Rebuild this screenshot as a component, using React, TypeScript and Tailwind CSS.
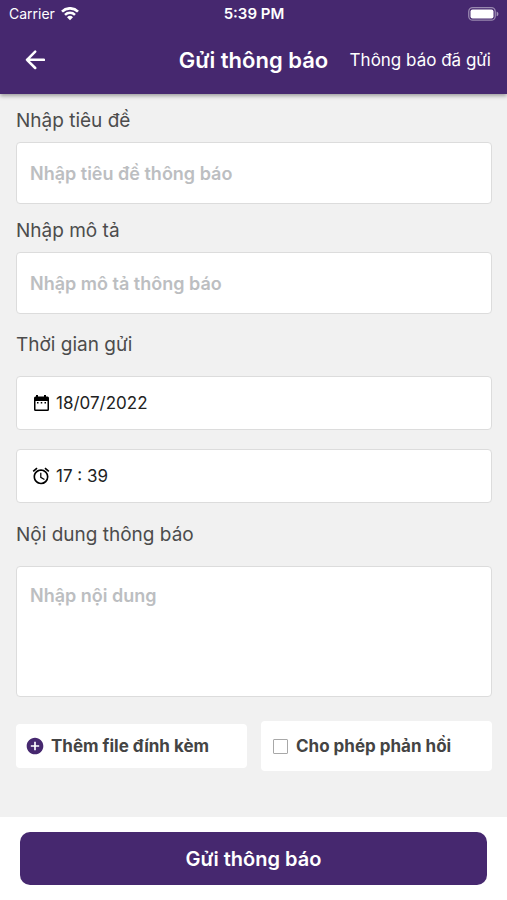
import { useState } from 'react';
import type { ReactNode } from 'react';
import { MdAddCircle, MdAlarm } from 'react-icons/md';

function WifiIcon() {
  return (
    <svg viewBox="0 0 18 14" className="w-[18px] h-[14px]" fill="none" stroke="currentColor" aria-hidden="true">
      <path d="M1 4.6a11.4 11.4 0 0 1 16 0" strokeWidth="2.7" />
      <path d="M4 7.8a7.1 7.1 0 0 1 10 0" strokeWidth="2.5" />
      <path d="M9 13.2 6 10.2a4.3 4.3 0 0 1 6 0Z" fill="currentColor" stroke="none" />
    </svg>
  );
}

function BatteryIcon() {
  return (
    <svg viewBox="0 0 31 14" className="w-[31px] h-[14px]" aria-hidden="true">
      <rect x="0.75" y="0.65" width="26.5" height="12.5" rx="4" fill="none" stroke="#fff" strokeOpacity="0.45" strokeWidth="1.3" />
      <rect x="2.5" y="2.4" width="23" height="9" rx="2" fill="#fff" />
      <path d="M28.6 4.5c1.2.5 1.8 1.3 1.8 2.4s-.6 1.900-1.800 2.400Z" fill="#fff" fillOpacity="0.5" />
    </svg>
  );
}

function BackIcon() {
  return (
    <svg
      viewBox="0 0 20 20"
      className="w-5 h-5"
      fill="none"
      stroke="currentColor"
      strokeWidth="2.5"
      strokeLinecap="round"
      strokeLinejoin="round"
      aria-hidden="true"
    >
      <path d="M2 9.8h17M10.2 1.600 2 9.800l8.200 8.200" />
    </svg>
  );
}

function CalendarIcon() {
  return (
    <svg viewBox="0 0 20 20" className="w-5 h-5 text-black" fill="currentColor" aria-hidden="true">
      <path
        fillRule="evenodd"
        d="M5 2h2v1.500h6V2h2v1.500h1.500A1.500 1.500 0 0 1 18 5v11.500a1.500 1.500 0 0 1-1.500 1.500h-12A1.500 1.500 0 0 1 3 16.500V5a1.500 1.500 0 0 1 1.500-1.500H5ZM4.500 8v8.500h12V8Z"
      />
      <path d="M6 9h1.500v1.500H6ZM9.750 9h1.500v1.500h-1.500ZM13.500 9H15v1.500h-1.500Z" />
    </svg>
  );
}

function StatusBar() {
  return (
    <div className="grid grid-cols-3 items-center h-7 pl-[9px] pr-2 text-sm">
      <div className="flex items-center gap-1.5">
        <span>Carrier</span>
        <WifiIcon />
      </div>
      <span className="text-center text-[15px] font-semibold">5:39 PM</span>
      <div className="flex justify-end">
        <BatteryIcon />
      </div>
    </div>
  );
}

interface PickerFieldProps {
  icon: ReactNode;
  label: string;
  value: string;
  onChange: (value: string) => void;
}

function PickerField({ icon, label, value, onChange }: PickerFieldProps) {
  return (
    <label className="flex items-center gap-[5px] h-[54px] px-3.5 bg-white border border-[#dcdcdc] rounded text-[#222]">
      {icon}
      <input
        type="text"
        aria-label={label}
        value={value}
        onChange={(e) => onChange(e.target.value)}
        className="flex-1 min-w-0 h-full text-[17px] outline-none"
      />
    </label>
  );
}

const labelClass = 'block text-[19px] leading-7 text-[#4c4c4c]';
const fieldClass =
  'block w-full px-[13px] bg-white border border-[#dcdcdc] rounded text-lg text-[#222] outline-none placeholder:font-semibold placeholder:text-[#bcbec1]';

export default function App() {
  const [date, setDate] = useState('18/07/2022');
  const [time, setTime] = useState('17 : 39');
  const [allowReply, setAllowReply] = useState(false);

  return (
    <div className="flex flex-col min-h-screen bg-[#f1f1f1] font-['Inter','Liberation_Sans',sans-serif]">
      <header className="bg-[#46286f] text-white pb-0.5 shadow-[0_2px_4px_rgba(0,0,0,0.35)]">
        <StatusBar />
        <div className="grid grid-cols-[1fr_auto_1fr] items-center h-16 px-4">
          <button type="button" aria-label="Quay lại" className="justify-self-start px-[9px] py-2">
            <BackIcon />
          </button>
          <h1 className="text-[22px] font-semibold whitespace-nowrap">Gửi thông báo</h1>
          <a href="#sent" className="justify-self-end text-[17px] leading-6 whitespace-nowrap">
            Thông báo đã gửi
          </a>
        </div>
      </header>

      <form id="notice" className="flex-1 pl-4 pr-[15px] pt-[13px] pb-[45px]" onSubmit={(e) => e.preventDefault()}>
        <label htmlFor="title" className={labelClass}>
          Nhập tiêu đề
        </label>
        <input id="title" type="text" placeholder="Nhập tiêu đề thông báo" className={`${fieldClass} h-[62px] mt-[7px]`} />

        <label htmlFor="description" className={`${labelClass} mt-[13px]`}>
          Nhập mô tả
        </label>
        <input
          id="description"
          type="text"
          placeholder="Nhập mô tả thông báo"
          className={`${fieldClass} h-[62px] mt-[7px]`}
        />

        <fieldset className="mt-[17px]">
          <legend className={labelClass}>Thời gian gửi</legend>
          <div className="flex flex-col gap-[19px] mt-[17px]">
            <PickerField icon={<CalendarIcon />} label="Ngày gửi" value={date} onChange={setDate} />
            <PickerField
              icon={<MdAlarm className="w-5 h-5 text-black" />}
              label="Giờ gửi"
              value={time}
              onChange={setTime}
            />
          </div>
        </fieldset>

        <label htmlFor="content" className={`${labelClass} mt-[18px]`}>
          Nội dung thông báo
        </label>
        <textarea
          id="content"
          placeholder="Nhập nội dung"
          className={`${fieldClass} h-[131px] mt-[17px] pt-[15px] leading-7 resize-none`}
        />

        <div className="grid grid-cols-2 items-center gap-3.5 mt-6 text-[17px] leading-6 font-bold text-[#444]">
          <button type="button" className="flex items-center gap-1.5 h-11 px-[9px] bg-white rounded">
            <MdAddCircle className="w-5 h-5 text-[#46286f]" />
            Thêm file đính kèm
          </button>
          <label className="flex items-center gap-2 h-[50px] px-3 bg-white rounded">
            <input
              type="checkbox"
              checked={allowReply}
              onChange={(e) => setAllowReply(e.target.checked)}
              className="appearance-none w-[15px] h-[15px] border border-[#a8a8a8] rounded-[1px] checked:bg-[#46286f]"
            />
            Cho phép phản hồi
          </label>
        </div>
      </form>

      <footer className="bg-white px-5 py-[15px]">
        <button
          type="submit"
          form="notice"
          className="block w-full h-[53px] bg-[#46286f] text-white text-xl font-semibold rounded-[10px]"
        >
          Gửi thông báo
        </button>
      </footer>
    </div>
  );
}
